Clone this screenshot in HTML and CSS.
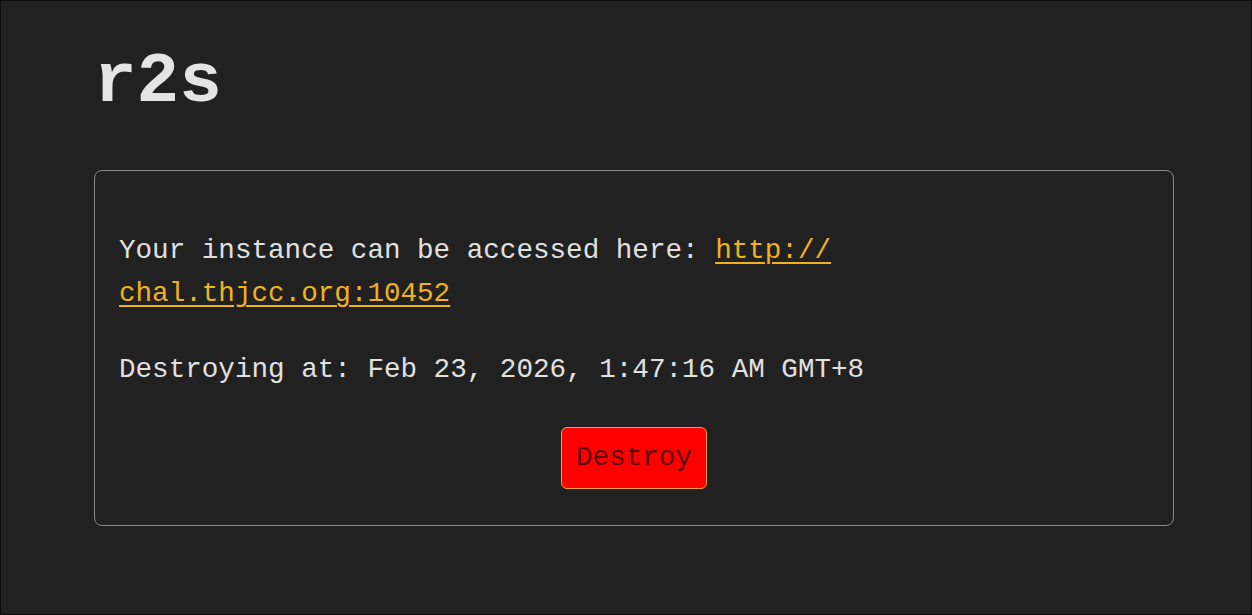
FILE: index.html
```html
<!DOCTYPE html>
<html lang="en">
<head>
<meta charset="utf-8">
<title>r2s</title>
<link rel="stylesheet" href="styles.css">
</head>
<body>
<div class="page">
  <h1 class="title">r2s</h1>
  <div class="card">
    <p class="line">Your instance can be accessed here: <a class="link" href="#">http://<wbr>chal.thjcc.org:10452</a></p>
    <p class="line second">Destroying at: Feb 23, 2026, 1:47:16 AM GMT+8</p>
    <div class="actions">
      <button class="destroy" type="button">Destroy</button>
    </div>
  </div>
</div>
</body>
</html>
```

FILE: styles.css
```css
html, body {
  margin: 0;
  padding: 0;
  background: #212121;
}
.page {
  box-sizing: border-box;
  width: 1252px;
  height: 615px;
  border: 1px solid #0d0d0d;
  padding: 0 0 0 93px;
  font-family: "Liberation Mono", "DejaVu Sans Mono", monospace;
  color: #e0e0e0;
  overflow: hidden;
}
.title {
  margin: 46px 0 0 0;
  font-size: 71px;
  line-height: 71px;
  font-weight: bold;
  color: #e4e4e4;
}
.card {
  box-sizing: border-box;
  width: 1080px;
  margin-top: 52px;
  border: 1px solid #8c8c8c;
  border-radius: 8px;
  padding: 58px 24px 36px 24px;
}
.line {
  margin: 0;
  font-size: 27.6px;
  line-height: 43px;
}
.second {
  margin-top: 33px;
}
.link {
  color: #f0b21c;
  text-decoration: underline;
  text-underline-offset: 4px;
  text-decoration-thickness: 1.5px;
}
.actions {
  display: flex;
  justify-content: center;
  margin-top: 36px;
}
.destroy {
  font-family: "Liberation Mono", "DejaVu Sans Mono", monospace;
  font-size: 27.6px;
  line-height: 32px;
  padding: 14px 14px;
  background: #ff0000;
  color: #5c0808;
  border: 1px solid #f0a030;
  border-radius: 6px;
}
```
